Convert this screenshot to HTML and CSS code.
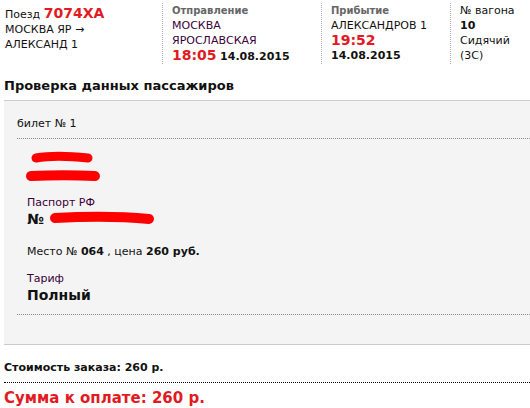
FILE: index.html
```html
<!doctype html>
<html lang="ru">
<head>
<meta charset="utf-8">
<title>Проверка данных</title>
<link rel="stylesheet" href="styles.css">
</head>
<body>

<div id="order">

  <div class="trip">
    <div class="trip-col train">
      <p>Поезд <span class="train-no">7074ХА</span></p>
      <p>МОСКВА ЯР &rarr;</p>
      <p>АЛЕКСАНД 1</p>
    </div>
    <div class="trip-col depart">
      <p class="caption">Отправление</p>
      <p>МОСКВА</p>
      <p>ЯРОСЛАВСКАЯ</p>
      <p><span class="time">18:05</span> <b>14.08.2015</b></p>
    </div>
    <div class="trip-col arrive">
      <p class="caption">Прибытие</p>
      <p>АЛЕКСАНДРОВ 1</p>
      <p class="time">19:52</p>
      <p><b>14.08.2015</b></p>
    </div>
    <div class="trip-col car">
      <p>№ вагона</p>
      <p><b>10</b></p>
      <p>Сидячий</p>
      <p>(3С)</p>
    </div>
  </div>

  <h2>Проверка данных пассажиров</h2>

  <div class="passengers">
    <div class="ticket-head">билет № 1</div>
    <div class="ticket">
      <div class="name">
        <svg width="80" height="40" viewBox="0 0 80 40">
          <path d="M12 11 C 28 8, 46 9, 64 11" fill="none" stroke="#f00" stroke-width="9" stroke-linecap="round"/>
          <path d="M7 29 C 30 28, 50 28, 71 29" fill="none" stroke="#f00" stroke-width="10" stroke-linecap="round"/>
        </svg>
      </div>
      <div class="field passport">
        <p class="label">Паспорт РФ</p>
        <p class="value">№
          <svg width="110" height="16" viewBox="0 0 110 16" class="hidden-no">
            <path d="M6 8 C 40 6, 70 6, 100 9" fill="none" stroke="#f00" stroke-width="10" stroke-linecap="round"/>
          </svg>
        </p>
      </div>
      <p class="seat">Место № <b>064</b> , цена <b>260 руб.</b></p>
      <div class="field tariff">
        <p class="label">Тариф</p>
        <p class="value">Полный</p>
      </div>
    </div>
  </div>

  <div class="total">
    <p class="cost">Стоимость заказа: 260 р.</p>
    <p class="pay">Сумма к оплате: 260 р.</p>
  </div>

</div>

</body>
</html>
```

FILE: styles.css
```css
body {
  margin: 0;
  background: #fff;
  color: #111;
  font-family: "DejaVu Sans", Verdana, sans-serif;
  font-size: 11px;
}

p {
  margin: 0;
}

#order .trip {
  display: flex;
  padding: 3px 0 6px 5px;
}

#order .trip-col {
  line-height: 15px;
}

#order .trip-col + .trip-col {
  border-left: 1px dotted #aaa;
  padding-left: 9px;
}

#order .trip .train {
  width: 157px;
  padding-top: 3px;
}

#order .trip .depart {
  width: 149px;
}

#order .trip .arrive {
  width: 119px;
}

#order .trip .train-no {
  color: #e21a22;
  font-size: 14px;
  font-weight: bold;
}

#order .trip .caption {
  color: #666;
  font-size: 10px;
  font-weight: bold;
}

#order .trip .depart p:nth-child(2),
#order .trip .depart p:nth-child(3) {
  color: #3a003a;
}

#order .trip .time {
  color: #e21a22;
  font-size: 14px;
  font-weight: bold;
}

#order h2 {
  font-size: 13px;
  margin: 8px 0 7px 4px;
}

#order .passengers {
  background: #f4f4f4;
  border-top: 1px solid #ccc;
  border-bottom: 1px solid #ccc;
  margin-left: 4px;
  padding-bottom: 29px;
}

#order .ticket-head {
  padding: 16px 0 8px 13px;
}

#order .ticket {
  border-top: 1px dotted #888;
  border-bottom: 1px dotted #888;
  margin-left: 13px;
  padding: 8px 0 10px 10px;
}

#order .name svg {
  display: block;
  margin-left: -3px;
}

#order .field.passport {
  margin-top: 8px;
}

#order .field.tariff {
  margin-top: 13px;
}

#order .field .label {
  color: #3a003a;
  line-height: 15px;
}

#order .field .value {
  font-size: 14px;
  font-weight: bold;
  line-height: 18px;
}

#order .field .hidden-no {
  vertical-align: -2px;
}

#order .seat {
  margin-top: 17px;
}

#order .total {
  margin-left: 4px;
}

#order .cost {
  font-weight: bold;
  padding: 16px 0 8px;
  border-bottom: 1px dotted #000;
}

#order .pay {
  color: #e21a22;
  font-size: 15px;
  font-weight: bold;
  padding-top: 6px;
}
```
